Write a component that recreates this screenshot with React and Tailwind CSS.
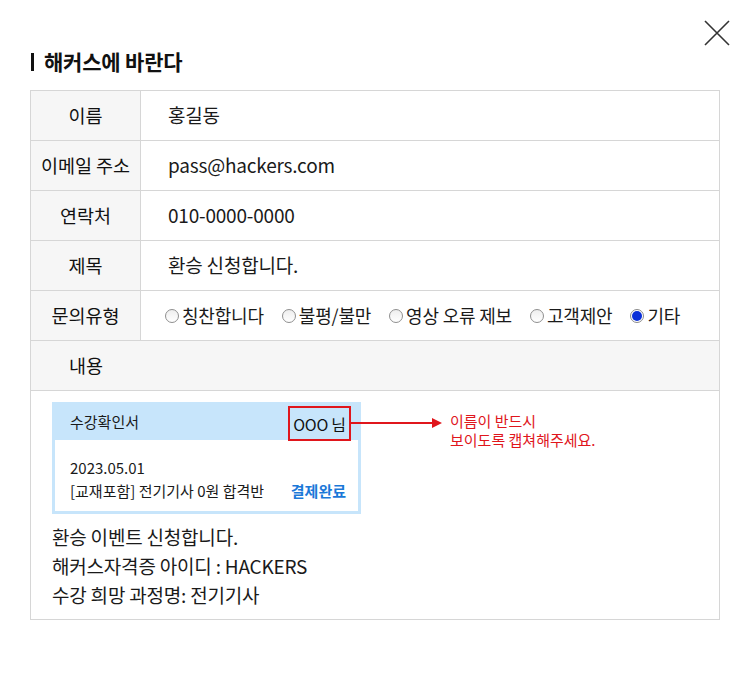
import React from "react";

const font = { fontFamily: '"Noto Sans CJK KR", "Noto Sans", sans-serif' };

function Radio({ checked }) {
  return checked ? (
    <span className="inline-flex w-[14px] h-[14px] rounded-full border border-[#8a8a8a] bg-white items-center justify-center mr-[3px]">
      <span className="w-[10px] h-[10px] rounded-full bg-[#0a2fd8]" />
    </span>
  ) : (
    <span className="inline-block w-[14px] h-[14px] rounded-full border border-[#8f8f8f] bg-gradient-to-b from-[#eeeeee] to-white mr-[3px]" />
  );
}

function Label({ children }) {
  return (
    <div className="w-[110px] shrink-0 bg-[#f6f6f6] border-r border-[#d6d6d6] flex items-center justify-center text-[18.5px] text-[#111]">
      {children}
    </div>
  );
}

function Row({ label, children }) {
  return (
    <div className="flex h-[50px] border-b border-[#d6d6d6]">
      <Label>{label}</Label>
      <div className="flex-1 flex items-center pl-[27px] text-[19px] tracking-[-0.2px] text-[#1a1a1a]">
        {children}
      </div>
    </div>
  );
}

export default function App() {
  const options = [
    ["칭찬합니다", false],
    ["불평/불만", false],
    ["영상 오류 제보", false],
    ["고객제안", false],
    ["기타", true],
  ];
  return (
    <div className="w-[750px] h-[680px] bg-white relative px-[30px] pt-[48px]" style={font}>
      <svg className="absolute left-[703px] top-[19px]" width="28" height="28" viewBox="0 0 28 28">
        <path d="M2 2 L26 26 M26 2 L2 26" stroke="#333" strokeWidth="1.6" fill="none" />
      </svg>
      <h2 className="flex items-center h-[28px] text-[21px] font-bold tracking-[-0.2px] text-[#111]">
        <span className="inline-block w-[3px] h-[18px] bg-[#111] ml-[1px] mr-[10px]" />
        해커스에 바란다
      </h2>
      <div className="mt-[14px] w-[690px] border border-[#d6d6d6]">
        <Row label="이름">홍길동</Row>
        <Row label="이메일 주소">pass@hackers.com</Row>
        <Row label="연락처">010-0000-0000</Row>
        <Row label="제목">환승 신청합니다.</Row>
        <div className="flex h-[50px] border-b border-[#d6d6d6]">
          <Label>문의유형</Label>
          <div className="flex-1 flex items-center pl-[24px] gap-[18px] text-[18px] tracking-[-0.2px] text-[#1a1a1a]">
            {options.map(([t, c]) => (
              <label key={t} className="flex items-center">
                <Radio checked={c} />
                {t}
              </label>
            ))}
          </div>
        </div>
        <div className="flex h-[50px] border-b border-[#d6d6d6] bg-[#f6f6f6]">
          <div className="w-[110px] flex items-center justify-center text-[18.5px] text-[#111]">내용</div>
        </div>
        <div className="px-[21px] pt-[11px] pb-[10px] relative">
          <div className="w-[309px] border-[3px] border-[#c7e5fb]">
            <div className="h-[35px] bg-[#c7e5fb] flex items-center justify-between pl-[15px] pr-[7px] relative">
              <span className="text-[15px] text-[#1a1a1a]">수강확인서</span>
              <span className="h-[35px] w-[63px] border-2 border-[#e0161c] flex items-center justify-center text-[16px] tracking-[-0.3px] text-[#111] translate-y-[1px]">
                OOO 님
              </span>
              <div className="absolute left-[296px] top-[17px] w-[82px] h-[2px] bg-[#e0161c]" />
              <div className="absolute left-[377px] top-[13px] w-0 h-0 border-y-[5px] border-y-transparent border-l-[10px] border-l-[#e0161c]" />
              <div className="absolute left-[395px] top-[6px] text-[15px] leading-[19px] text-[#e0161c] whitespace-nowrap">
                이름이 반드시
                <br />
                보이도록 캡쳐해주세요.
              </div>
            </div>
            <div className="bg-white pt-[16px] pb-[9px] pl-[15px] pr-[12px] text-[15px] leading-[23px] text-[#1a1a1a]">
              <div>2023.05.01</div>
              <div className="flex justify-between">
                <span>[교재포함] 전기기사 0원 합격반</span>
                <span className="font-bold text-[#1a78d8]">결제완료</span>
              </div>
            </div>
          </div>
          <div className="mt-[8px] text-[19px] leading-[29px] tracking-[-0.2px] text-[#1a1a1a]">
            <div>환승 이벤트 신청합니다.</div>
            <div>해커스자격증 아이디 : HACKERS</div>
            <div>수강 희망 과정명: 전기기사</div>
          </div>
        </div>
      </div>
    </div>
  );
}
